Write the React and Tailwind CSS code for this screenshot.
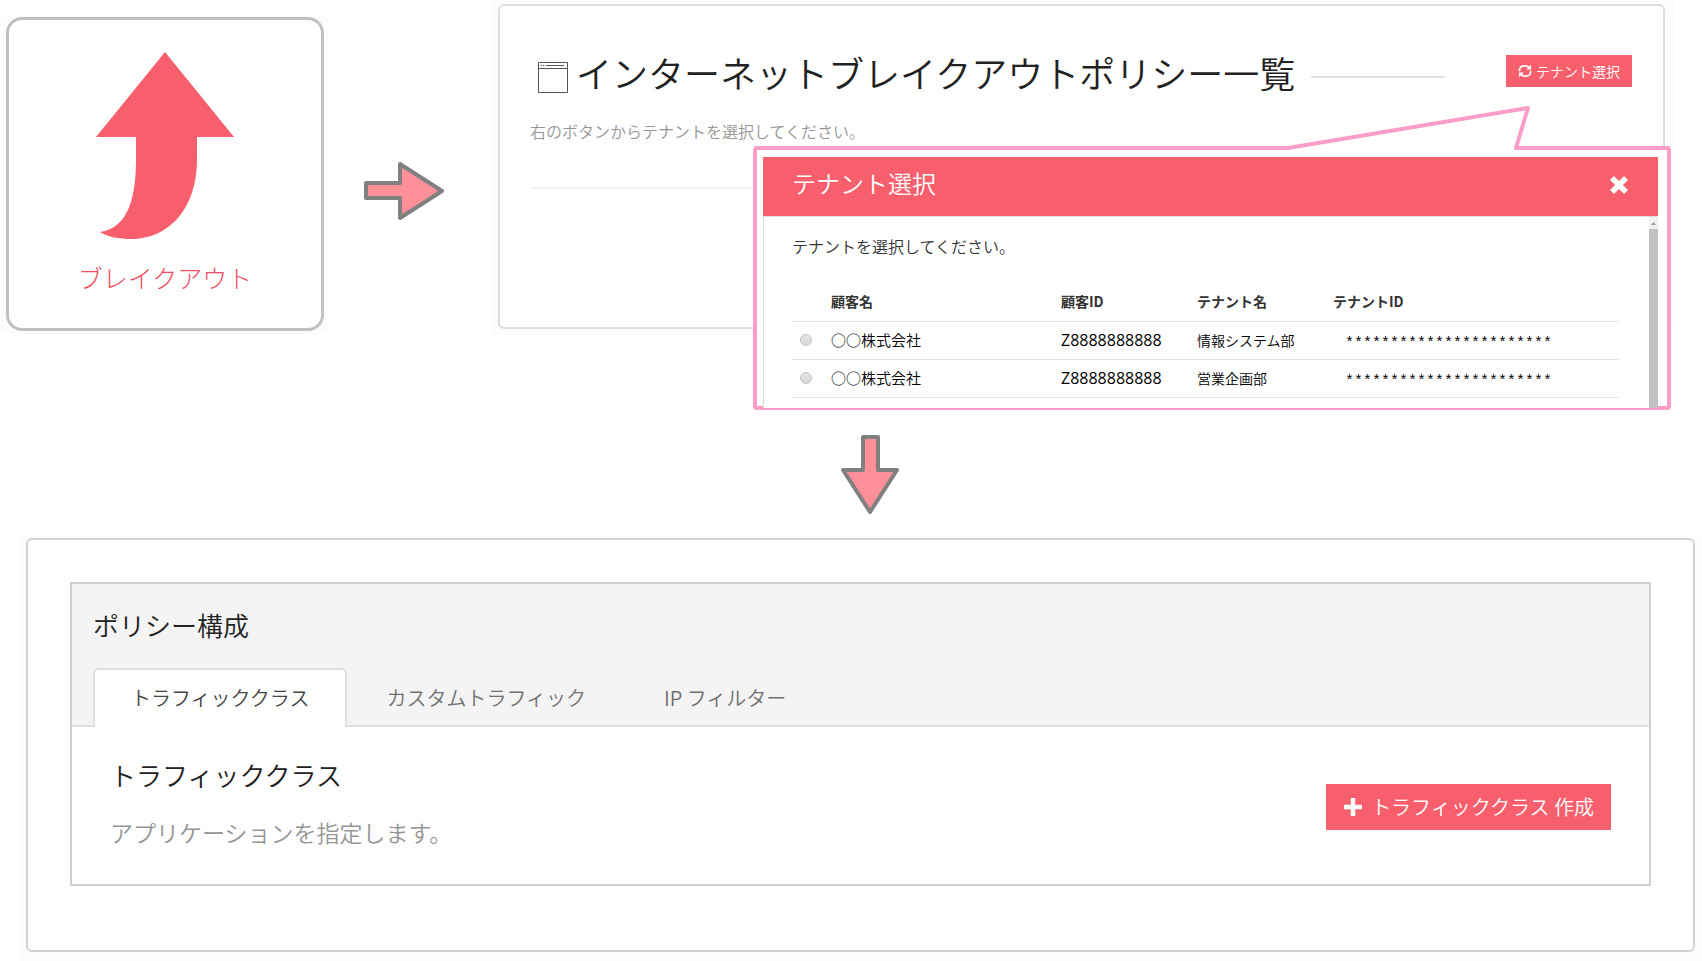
import { useState } from "react";

const tenants = [
  { customer: "○○株式会社", customerId: "Z8888888888", name: "情報システム部", id: "***********************" },
  { customer: "○○株式会社", customerId: "Z8888888888", name: "営業企画部", id: "***********************" },
];

const tabs = ["トラフィッククラス", "カスタムトラフィック", "IP フィルター"];

function BreakoutArrow() {
  return (
    <svg width="140" height="190" viewBox="0 0 140 190" className="text-[#f75f6d]" aria-hidden="true">
      <path
        fill="currentColor"
        d="M70 1 139 86H102V108C102 158 74 188 36 188C24 188 13 186 5 181C34 177 41 145 41 108V86H1Z"
      />
    </svg>
  );
}

function FlowArrowRight() {
  return (
    <svg width="80" height="58" viewBox="0 0 80 58" aria-hidden="true">
      <path d="M2 21H36V2L78 29 36 56V36H2Z" fill="#ff8f99" stroke="#808080" strokeWidth="4" strokeLinejoin="round" />
    </svg>
  );
}

function FlowArrowDown() {
  return (
    <svg width="58" height="79" viewBox="0 0 58 79" aria-hidden="true">
      <path d="M22 2H37V35H56L29 77 2 35H22Z" fill="#ff8f99" stroke="#808080" strokeWidth="4" strokeLinejoin="round" />
    </svg>
  );
}

function WindowIcon() {
  return (
    <svg width="30" height="31" viewBox="0 0 30 31" fill="none" stroke="#555" aria-hidden="true">
      <path d="M.5 .5H29.5V30.5H.5ZM.5 6.5H29.5" />
      <path d="M2.500 3.500H4M5 3.500H6.500M8 3.500H26" />
    </svg>
  );
}

function RefreshIcon() {
  return (
    <svg width="14" height="14" viewBox="0 0 14 14" fill="none" stroke="currentColor" strokeWidth="1.800" aria-hidden="true">
      <path d="M1.500 7.200V6A4.200 4.200 0 0 1 5.700 1.800H7.500C9 1.800 10 2.400 11 3.600" />
      <path d="M12.500 6.800V8A4.200 4.200 0 0 1 8.300 12.200H6.500C5 12.200 4 11.600 3 10.400" />
      <path d="M13 .8V5.500H8.300ZM1 13.200V8.500H5.700Z" fill="currentColor" stroke="none" />
    </svg>
  );
}

function CloseIcon() {
  return (
    <svg width="18" height="18" viewBox="0 0 18 18" stroke="currentColor" strokeWidth="5.500" aria-hidden="true">
      <path d="M2 2 16 16M16 2 2 16" />
    </svg>
  );
}

function PlusIcon() {
  return (
    <svg width="20" height="20" viewBox="0 0 20 20" stroke="currentColor" strokeWidth="4.500" aria-hidden="true">
      <path d="M10 1V19M1 10H19" />
    </svg>
  );
}

function TenantDialog() {
  const [selected, setSelected] = useState(null);
  return (
    <section
      role="dialog"
      aria-label="テナント選択"
      className="absolute top-[146px] right-[3px] left-[260px] rounded-sm border-4 border-[#fa9dc9] bg-white pt-[7px] pr-[9px] pl-[6px]"
    >
      <svg width="244" height="46" viewBox="0 0 244 46" className="absolute -top-[44px] right-[136px]" aria-hidden="true">
        <path d="M3 42 241 2 229 42V46H3Z" fill="#fff" />
        <path d="M1 42 241 2 229 42H244" fill="none" stroke="#fa9dc9" strokeWidth="4" strokeLinejoin="round" />
      </svg>
      <div className="relative -mb-0.5 bg-white">
        <header className="flex h-[59px] items-center justify-between bg-[#f75f6d] pr-[30px] pb-2 pl-[29px] text-white">
          <h2 className="text-2xl font-[350]">テナント選択</h2>
          <button type="button" aria-label="閉じる" className="pt-1">
            <CloseIcon />
          </button>
        </header>
        <div className="flex border-t border-l border-[#ddd]">
          <div className="flex-1 pt-[17px] pr-[30px] pb-[10px] pl-7">
            <p className="text-base font-[350] text-[#333]">テナントを選択してください。</p>
            <table className="mt-6 w-full table-fixed text-left text-sm">
              <thead>
                <tr className="h-[39px] border-b border-[#e4e4e4] text-[#333]">
                  <th className="w-[39px]" aria-label="選択" />
                  <th className="w-[230px] font-bold">顧客名</th>
                  <th className="w-[136px] font-bold">顧客ID</th>
                  <th className="w-[136px] font-bold">テナント名</th>
                  <th className="font-bold">テナントID</th>
                </tr>
              </thead>
              <tbody>
                {tenants.map((t, i) => (
                  <tr key={t.name} className="h-[38px] border-b border-[#e4e4e4] text-black">
                    <td className="pl-2">
                      <input
                        type="radio"
                        name="tenant"
                        aria-label={t.name}
                        checked={selected === i}
                        onChange={() => setSelected(i)}
                        className="block size-3 appearance-none rounded-full border border-[#c4c4c4] bg-linear-to-b from-[#e6e6e6] to-[#d6d6d6] checked:border-[#888]"
                      />
                    </td>
                    <td className="text-[15px] font-[350]">{t.customer}</td>
                    <td className="font-['Open_Sans'] text-base">{t.customerId}</td>
                    <td className="font-[350]">{t.name}</td>
                    <td className="pt-2 pl-3 font-['Liberation_Mono'] text-[15px]">{t.id}</td>
                  </tr>
                ))}
              </tbody>
            </table>
          </div>
          <div className="flex w-[9px] flex-col bg-[#f1f1f1]" aria-hidden="true">
            <svg width="9" height="12" viewBox="0 0 9 12">
              <path d="M2 8 4.500 5 7 8Z" fill="#999" />
            </svg>
            <div className="flex-1 bg-[#c1c1c1]" />
          </div>
        </div>
      </div>
    </section>
  );
}

export default function App() {
  const [active, setActive] = useState(0);
  return (
    <main className="min-h-screen bg-white font-['Noto_Sans_CJK_JP',sans-serif]">
      <div className="flex items-start">
        <div className="mt-[15px] w-[328px] bg-[#fcfbfe] pt-0.5 pr-1 pb-[3px] pl-1.5">
          <a
            href="#breakout"
            className="flex h-[314px] flex-col items-center rounded-2xl border-3 border-[#c0c0c0] bg-white pt-[31px] text-[#f04c61]"
          >
            <BreakoutArrow />
            <span className="mt-[18px] text-[25px] leading-9 font-light">ブレイクアウト</span>
          </a>
        </div>

        <div className="mt-[162px] mr-[49px] ml-[36px]">
          <FlowArrowRight />
        </div>

        <div className="relative mr-[28px] flex-1 bg-[#fcfbfe] pt-1 pr-[9px] pb-[5px] pl-[5px]">
          <section className="h-[325px] rounded-md border-2 border-[#ddd] bg-white pr-[31px] pl-[30px]">
            <div className="flex items-start justify-between pt-[39px]">
              <div className="flex flex-1 items-center">
                <div className="pt-2.5 pr-2 pl-2">
                  <WindowIcon />
                </div>
                <h1 className="text-4xl leading-[54px] font-[350] whitespace-nowrap text-[#222]">
                  インターネットブレイクアウトポリシー一覧
                </h1>
                <div className="mr-[61px] ml-4 flex-1 pt-2.5">
                  <div className="h-0.5 bg-[#e0e0e0]" />
                </div>
              </div>
              <button type="button" className="mt-[10px] flex h-8 items-center gap-1 bg-[#f75f6d] px-3 text-sm font-[350] text-white">
                <RefreshIcon />
                テナント選択
              </button>
            </div>
            <p className="mt-5 text-base font-[350] text-[#959595]">右のボタンからテナントを選択してください。</p>
            <hr className="mt-[44px] border-t-2 border-[#f2f2f2]" />
          </section>
          <TenantDialog />
        </div>
      </div>

      <div className="flex justify-center pt-[101px] pb-[21px] pl-[38px]">
        <FlowArrowDown />
      </div>

      <div className="ml-5 bg-[#fcfbfe] pt-[3px] pr-[7px] pb-[9px] pl-[6px]">
        <section className="rounded-md border-2 border-[#d2d2d2] bg-white px-[42px] pt-[42px] pb-[64px]">
          <div className="border-2 border-[#d0d0d0]">
            <div className="border-b-2 border-[#e0e0e0] bg-[#f4f4f4] px-[21px] pt-5">
              <h2 className="text-[26px] leading-[42px] font-[350] text-[#222]">ポリシー構成</h2>
              <div role="tablist" className="mt-[22px] -mb-0.5 flex">
                {tabs.map((tab, i) => (
                  <button
                    key={tab}
                    type="button"
                    role="tab"
                    aria-selected={active === i}
                    onClick={() => setActive(i)}
                    className={
                      active === i
                        ? "h-[59px] rounded-t-md border-2 border-b-0 border-[#e0e0e0] bg-white px-[36px] pb-0.5 text-xl font-[350] text-[#444]"
                        : "h-[59px] px-[39px] text-xl font-[350] text-[#707070]"
                    }
                  >
                    {tab}
                  </button>
                ))}
              </div>
            </div>
            <div className="flex items-center justify-between pt-[27px] pr-[38px] pb-[32px] pl-[38px]">
              <div>
                <h3 className="text-[26px] leading-[42px] font-[350] text-[#222]">トラフィッククラス</h3>
                <p className="mt-4 text-[23px] leading-10 font-[350] text-[#959595]">アプリケーションを指定します。</p>
              </div>
              <button type="button" className="mt-2 flex h-[46px] items-center gap-2 bg-[#f75f6d] px-[17px] text-xl font-[350] text-white">
                <PlusIcon />
                トラフィッククラス 作成
              </button>
            </div>
          </div>
        </section>
      </div>
    </main>
  );
}
